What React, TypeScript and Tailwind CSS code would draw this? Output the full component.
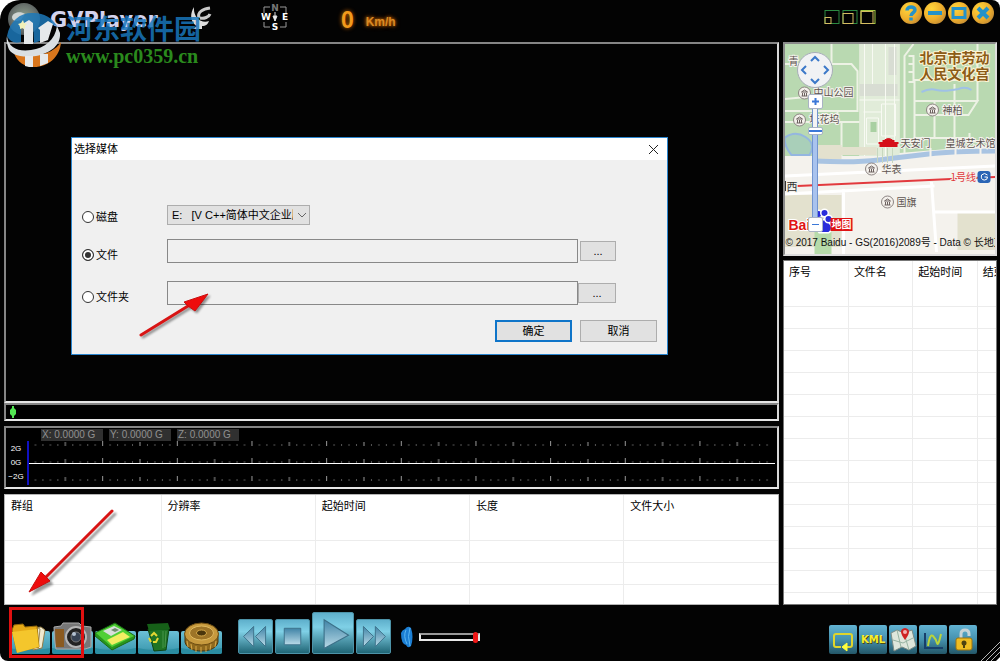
import type { ReactNode } from "react";
import { clsx } from "clsx";

const clipColumns = ["群组", "分辨率", "起始时间", "长度", "文件大小"];
const fileColumns = ["序号", "文件名", "起始时间", "结束时间"];

const sunken = "border-2 border-t-[#858585] border-l-[#858585] border-r-[#d8d8d8] border-b-[#e6e6e6]";
const dialogButton = "border border-[#adadad] bg-[#e1e1e1] text-black";

function OrbLogo() {
  return (
    <svg viewBox="0 0 34 36" className="h-9 w-[34px] shrink-0" aria-hidden="true">
      <defs>
        <radialGradient id="orb" cx="50%" cy="45%" r="60%">
          <stop offset="0" stopColor="#8fa48f" />
          <stop offset="0.6" stopColor="#6c7570" />
          <stop offset="1" stopColor="#4b4f50" />
        </radialGradient>
      </defs>
      <circle cx="18" cy="19" r="16" fill="url(#orb)" />
      <path d="M6 17c1-5 9-6 13-3l-4 6c-5 2-9 1-9-3z" fill="#cfd4d2" />
    </svg>
  );
}

function Watermark() {
  return (
    <div className="pointer-events-none absolute top-2.5 left-1.5 z-20 flex gap-1">
      <svg viewBox="0 0 56 58" className="h-[58px] w-14" aria-hidden="true">
        <path d="M1 26C4 10 15 2 28 3c10 0 18 5 23 13L40 13l-3 17-9 3-1-20H15v19C9 34 4 32 1 26z" fill="#1c78b8" opacity=".85" />
        <path d="M8 43c3 9 11 14 20 14 14 0 26-10 27-25-5 8-14 12-25 13-9 1-16 0-22-2z" fill="#d9761c" />
        <path d="M1 26c1 12 12 16 24 14 14-2 24-10 26-24l3 7c1 12-9 20-24 23-15 2-26-1-28-9-1-4-2-7-1-11z" fill="#dadfe2" />
        <path d="M13 16 23 10l4 3v21h-9V19zM32 18l10-7 5 3-5 16-8 3v-13z" fill="#e6e9eb" />
        <path d="M19 46h8v11h-4l-4-1zM34 44h8v9l-8 3z" fill="#e6e9eb" />
        <path d="m17 10 1 3 3 1-2 2v3l-2-1-3 1v-3l-2-2 3-1z" fill="#f2f0b8" />
      </svg>
      <div className="pt-1.5">
        <div className="font-['Noto_Sans_CJK_SC',sans-serif] text-[27px] leading-6 font-bold text-[#1877bd]/85">河东软件园</div>
        <div className="pt-1 font-['Liberation_Serif',serif] text-[20px] leading-6 font-bold text-[#2a8a1d]">www.pc0359.cn</div>
      </div>
    </div>
  );
}

function Compass() {
  return (
    <svg viewBox="0 0 30 30" className="h-[30px] w-[30px]" fontFamily="DejaVu Sans, sans-serif" fontWeight="700" fontSize="9" textAnchor="middle">
      <path d="M10 5H4v6M20 5h6v6M4 20v5h6M26 20v5h-6" fill="none" stroke="#9b9b9b" />
      <path d="M15 10v9M13 14h4l-2 5z" fill="#fff" stroke="#ddd" />
      <text x="15" y="9" fill="#777">N</text>
      <text x="6" y="18" fill="#fff">W</text>
      <text x="25" y="18" fill="#fff">E</text>
      <text x="15" y="28" fill="#fff">S</text>
    </svg>
  );
}

function LayoutButton({ size, label }: { size: number; label: string }) {
  return (
    <button type="button" aria-label={label} className="h-4 w-4">
      <svg viewBox="0 0 16 16" className="block">
        <rect x="1" y="1.5" width="14" height="13" fill="none" stroke={size > 10 ? "#a3c844" : "#2c8a42"} />
        <rect x="1" y={14.5 - size} width={size} height={size} fill="none" stroke="#d5bd62" />
      </svg>
    </button>
  );
}

function RoundButton({ label, children }: { label: string; children: ReactNode }) {
  return (
    <button
      type="button"
      aria-label={label}
      className="flex h-[22px] w-[22px] items-center justify-center rounded-full bg-radial-[at_35%_30%] from-[#ffd53c] via-[#eeae2c] to-[#a8763a]"
    >
      <svg viewBox="0 0 22 22" className="h-[22px] w-[22px]" fill="none" stroke="#2592c9" strokeWidth="4">
        {children}
      </svg>
    </button>
  );
}

function Header() {
  return (
    <header className="relative flex h-[42px] items-start pr-1.5 pl-1.5">
      <OrbLogo />
      <h1 className="mt-1.5 ml-2.5 font-['DejaVu_Sans',sans-serif] text-[21px] leading-7 font-bold text-[#d3d3ee]">GVPlayer</h1>
      <svg viewBox="0 0 22 24" className="mt-1.5 ml-8 h-6 w-[22px]" aria-hidden="true">
        <path d="M4 1C-1 9 1 17 7 20l-4 3h9v-3c4 0 6-2 7-5-8 3-16-4-15-14z" fill="#dcdcdc" />
        <path d="M9 12c-2-6 4-9 11-10M10 12c4 1 9-1 10-4" fill="none" stroke="#c9c9c9" strokeWidth="3" />
      </svg>
      <div className="mt-0.5 ml-12">
        <Compass />
      </div>
      <div className="ml-[51px] flex items-end font-['Liberation_Sans',sans-serif] font-bold">
        <span className="pt-1.5 text-[23px] leading-7 text-[#f29a1c] [text-shadow:0_0_4px_#d06a00]">0</span>
        <span className="ml-3 text-xs leading-6 text-[#d98a25] [text-shadow:0_0_3px_#d06a00,0_0_5px_#a85000]">Km/h</span>
      </div>
      <div className="mt-[9px] ml-auto flex gap-0.5">
        <LayoutButton size={6} label="小窗口" />
        <LayoutButton size={10} label="中窗口" />
        <LayoutButton size={12} label="大窗口" />
      </div>
      <div className="mt-0.5 ml-6 flex gap-0.5">
        <RoundButton label="帮助">
          <path d="M7 8.500C7 4 15 4 15 8c0 3-4 2.500-4 6M11 15.500v3" strokeWidth="3.500" />
        </RoundButton>
        <RoundButton label="最小化">
          <path d="M4 11h14" />
        </RoundButton>
        <RoundButton label="最大化">
          <path d="M5 6.500h12v9H5z" strokeWidth="3" />
        </RoundButton>
        <RoundButton label="关闭">
          <path d="m6 6 10 10M16 6 6 16" />
        </RoundButton>
      </div>
      <Watermark />
    </header>
  );
}

function MediaRow({ label, checked, children }: { label: string; checked?: boolean; children: ReactNode }) {
  return (
    <div className="flex items-end">
      <label className="flex h-4 w-[85px] shrink-0 items-center gap-0.5">
        <input
          type="radio"
          name="media"
          defaultChecked={checked}
          className="h-3 w-3 appearance-none rounded-full border border-[#333] bg-white checked:bg-[#333] checked:shadow-[inset_0_0_0_2px_#fff]"
        />
        {label}
      </label>
      {children}
    </div>
  );
}

function MediaDialog() {
  return (
    <section role="dialog" aria-labelledby="media-title" className="absolute top-[93px] left-[65px] z-10 w-[597px] border border-[#2b86cf] bg-[#f0f0f0] text-[11px] text-black">
      <div className="flex h-[22px] items-center justify-between bg-white pr-2 pl-0.5">
        <h2 id="media-title">选择媒体</h2>
        <button type="button" aria-label="关闭">
          <svg viewBox="0 0 11 11" className="h-[11px] w-[11px]" stroke="#222">
            <path d="m1 1 9 9M10 1l-9 9" />
          </svg>
        </button>
      </div>
      <form className="pt-[45px] pr-2.5 pb-3 pl-2.5">
        <MediaRow label="磁盘">
          <div className="relative">
            <select aria-label="磁盘" className="block h-5 w-[143px] appearance-none overflow-hidden border border-[#adadad] bg-[#e1e1e1] pr-4 pl-1 text-clip">
              <option>E:&nbsp;&nbsp; [V C++简体中文企业版]</option>
            </select>
            <svg viewBox="0 0 8 5" className="pointer-events-none absolute top-2 right-1 h-[5px] w-2" fill="none" stroke="#666">
              <path d="m0 0 4 4 4-4" />
            </svg>
          </div>
        </MediaRow>
        <div className="mt-3.5">
          <MediaRow label="文件" checked>
            <input type="text" aria-label="文件路径" className="h-6 w-[411px] border border-[#888] bg-[#f0f0f0] px-1" />
            <button type="button" aria-label="浏览文件" className={clsx(dialogButton, "ml-0.5 h-5 w-9 self-center")}>...</button>
          </MediaRow>
        </div>
        <div className="mt-4.5">
          <MediaRow label="文件夹">
            <input type="text" aria-label="文件夹路径" className="h-6 w-[411px] border border-[#888] bg-[#f0f0f0] px-1" />
            <button type="button" aria-label="浏览文件夹" className={clsx(dialogButton, "h-5 w-[38px] self-center")}>...</button>
          </MediaRow>
        </div>
        <div className="mt-[15px] flex justify-end gap-2">
          <button type="button" className="h-[22px] w-[77px] border-2 border-[#0f75c9] bg-[#e1e1e1]">确定</button>
          <button type="button" className={clsx(dialogButton, "h-[22px] w-[77px]")}>取消</button>
        </div>
      </form>
      <svg viewBox="0 0 72 48" className="pointer-events-none absolute top-[154px] left-[66px] h-12 w-[72px] drop-shadow-[2px_2px_1px_rgba(0,0,0,0.4)]">
        <path d="M3 43 50 14" stroke="#d81414" strokeWidth="3" strokeLinecap="round" />
        <path d="M70 2 46 10l4 4 7 5z" fill="#ee0c0c" stroke="#c80f0f" />
      </svg>
    </section>
  );
}

function SensorPanel() {
  const ticks = Array.from({ length: 10 }, (_, i) => i);
  return (
    <section className={clsx("mt-[5px] h-[63px] bg-black pt-px", sunken)}>
      <div className="flex gap-1.5 pl-[35px] font-['Liberation_Sans',sans-serif] text-[10px] leading-3 text-[#909090]">
        <div className="w-[62px] bg-[#303030] pl-px">X: 0.0000 G</div>
        <div className="w-[62px] bg-[#303030] pl-px">Y: 0.0000 G</div>
        <div className="w-[62px] bg-[#303030] pl-px">Z: 0.0000 G</div>
      </div>
      <div className="flex h-[45px]">
        <div className="flex w-5 shrink-0 flex-col pt-px text-center font-['Liberation_Sans',sans-serif] text-[8px] leading-[14px] text-white">
          <span>2G</span>
          <span>0G</span>
          <span>−2G</span>
        </div>
        <svg className="mr-0.5 h-[45px] min-w-0 flex-1" aria-hidden="true">
          <defs>
            <pattern id="ticks" width="74.66" height="45" patternUnits="userSpaceOnUse" x="1.500">
              {ticks.map((i) => {
                const h = i === 0 ? 5 : i === 5 ? 4 : 2;
                const x = i * 7.466 + 0.5;
                return (
                  <path
                    key={i}
                    d={`M${x} 5v-${h}M${x} 22v-${h}M${x} 40v-${h}`}
                    stroke={h > 2 ? "#999" : "#555"}
                  />
                );
              })}
            </pattern>
          </defs>
          <rect x="5" width="99%" height="45" fill="url(#ticks)" />
          <path d="M2 0v44" stroke="#1010c0" strokeWidth="2" />
          <rect x="3" y="22" width="100%" height="1" fill="#fff" />
        </svg>
      </div>
    </section>
  );
}

function ClipTable() {
  return (
    <section className="relative mt-[5px] border border-[#b5b5b5] bg-white">
      <table className="w-full table-fixed border-collapse text-left text-[11px] text-black">
        <thead>
          <tr className="h-[23px]">
            {clipColumns.map((name) => (
              <th key={name} className="border-r border-[#ececec] pl-1.5 font-normal first:w-[156px] last:border-r-0">{name}</th>
            ))}
          </tr>
        </thead>
        <tbody>
          {[0, 1, 2, 3].map((row) => (
            <tr key={row} className="h-[22px] border-b border-[#ececec] last:h-[20px] last:border-b-0">
              {clipColumns.map((name) => (
                <td key={name} className="border-r border-[#ececec] last:border-r-0" />
              ))}
            </tr>
          ))}
        </tbody>
      </table>
      <svg viewBox="0 0 92 90" className="pointer-events-none absolute top-[12px] left-[21px] h-[90px] w-[92px] drop-shadow-[3px_3px_1px_rgba(0,0,0,0.4)]">
        <path d="M86 4 16 74" stroke="#d81414" strokeWidth="3" strokeLinecap="round" />
        <path d="M3 85 15 65l4 4 5 5z" fill="#ee0c0c" stroke="#c80f0f" />
      </svg>
    </section>
  );
}

function FileTable() {
  return (
    <section className="mt-1 min-h-0 flex-1 basis-0 overflow-hidden border border-[#777] bg-white">
      <table className="w-[258px] table-fixed border-collapse text-left text-[11px] text-black">
        <thead>
          <tr className="h-[23px]">
            {fileColumns.map((name) => (
              <th key={name} className="border-r border-[#ececec] pl-[5px] font-normal whitespace-nowrap">{name}</th>
            ))}
          </tr>
        </thead>
        <tbody>
          {Array.from({ length: 15 }, (_, row) => (
            <tr key={row} className="h-[22px] border-b border-[#ececec]">
              {fileColumns.map((name) => (
                <td key={name} className="border-r border-[#ececec]" />
              ))}
            </tr>
          ))}
        </tbody>
      </table>
    </section>
  );
}

function Landmark({ x, y }: { x: number; y: number }) {
  return (
    <g transform={`translate(${x} ${y})`}>
      <circle r="6" fill="#f4f1ec" stroke="#8b8381" />
      <path d="M-3-1 0-3l3 2zM-2 0v3M0 0v3M2 0v3M-3 3h6" fill="none" stroke="#6d6260" />
    </g>
  );
}

function MapDrawing() {
  return (
    <svg viewBox="0 0 211 210" preserveAspectRatio="xMidYMid slice" className="h-full w-full" fontFamily="Noto Sans CJK SC, sans-serif" fontSize="10" fill="#5d5450">
      <rect width="211" height="210" fill="#f4f2ed" />
      <path d="M0 0h75v112H0zM115 0h96v101l-96 8z" fill="#b9d9b1" />
      <rect x="75" width="40" height="112" fill="#e1ecd9" />
      <path d="M75 40h38v12H75zM104 3h8v28h-8z" fill="#d8ddd3" />
      <path d="M80 0v112M88 0v40M101 0v112M110 0v100M75 56h40M82 74h12v26H82zM97 60h14v32H97zM79 68h18" fill="none" stroke="#f8faf3" />
      <rect x="86" y="78" width="6" height="10" fill="#a9d0a2" />
      <path d="M0 20h67l6 7v40H0M47 0v20M0 78h75M57 78v34M53 67v11M0 55l22-2" fill="none" stroke="#edf2e5" strokeWidth="2" />
      <path d="M129 0l-9 12v97M124 12h5v26h-5M124 20h5M124 28h5M130 36v58h55v-5M130 57h63l-9 14h-54M193 57V0M150 57v37M170 40v54M130 36h65" fill="none" stroke="#edf2e5" strokeWidth="2" />
      <path d="M137 48q8-4 15-2t22-1q7-3 13 1" fill="none" stroke="#9fc1e6" strokeWidth="2" />
      <path d="M0 94q10-8 21-1t4 18H7Q0 103 0 94z" fill="#a9cfb9" stroke="#94b6e0" strokeWidth="2" />
      <path d="M33 101h24v14H33zM0 151h57v52H0zM173 168h38v38h-38zM57 103h35v8H57z" fill="#e3e1ce" />
      <path d="M30 178h17v32H30z" fill="#b6dbaa" />
      <path d="M30 117q40 2 64-1t50-6 67-3" fill="none" stroke="#a9c4e2" strokeWidth="5" />
      <path d="M146 104v12M171 102v12M196 102v10" stroke="#f4f2ed" strokeWidth="2" />
      <path d="M0 132l211-10M59 145v65M147 138l5 70M150 168h61M0 150l150-8" fill="none" stroke="#fff" strokeWidth="3" />
      <path d="M93 104v15M98 104v15M103 104v15M108 104v15" stroke="#c7d7bf" />
      <path d="M13 142 211 133" stroke="#e23a3e" strokeWidth="2" />
      <g fill="#8c5c16" stroke="#fdf3d2" strokeWidth="2" paintOrder="stroke" fontSize="14" fontWeight="700">
        <text x="135" y="19">北京市劳动</text>
        <text x="135" y="35">人民文化宫</text>
      </g>
      <g stroke="#f4f2ed" strokeWidth="2" paintOrder="stroke">
        <text x="4" y="21">青</text>
        <text x="29" y="52">中山公园</text>
        <text x="25" y="79">坛花坞</text>
        <text x="158" y="70">神柏</text>
        <text x="116" y="103">天安门</text>
        <text x="161" y="103">皇城艺术馆</text>
        <text x="97" y="129">华表</text>
        <text x="112" y="162">国旗</text>
        <text x="166" y="137" fill="#e0353a">1号线</text>
        <text x="2" y="147" fontSize="11" fill="#333">西</text>
        <path d="M1 137v10" stroke="#333" strokeWidth="1" />
      </g>
      <Landmark x={20} y={49} />
      <Landmark x={15} y={76} />
      <Landmark x={148} y={66} />
      <Landmark x={87} y={125} />
      <Landmark x={103} y={158} />
      <path d="M95 103v-3h-1v-2h4v-2h12v2h4v2h-1v3z" fill="#d5101a" />
      <path d="M99 97q5-5 10 0z" fill="#d5101a" stroke="#d5101a" />
      <rect x="193" y="127" width="13" height="12" rx="3" fill="#2a65b5" />
      <path d="M203 131q-3-3-6 0-1 5 3 5 3 0 3-3h-3" fill="none" stroke="#fff" />
      <g fill="#2a2ddb" stroke="#fff" paintOrder="stroke" strokeWidth="3">
        <path d="M35 188q-5-6 3-11 3-2 6 2 5 6 0 9z" />
        <circle cx="34" cy="170" r="3" />
        <circle cx="40" cy="169" r="3" />
        <circle cx="44" cy="175" r="3" />
      </g>
      <text x="4" y="186" fontFamily="Liberation Sans, sans-serif" fontSize="14" fontWeight="700" fill="#e01414" stroke="#fff" strokeWidth="2" paintOrder="stroke">Bai</text>
      <rect x="46" y="174" width="22" height="13" fill="#e01414" />
      <text x="47" y="184" fontWeight="700" fill="#fff">地图</text>
      <text x="1" y="202" fontFamily="Liberation Sans, Noto Sans CJK SC, sans-serif" fontSize="10" fill="#111">
        © 2017 Baidu - GS(2016)2089号 - Data © 长地万
      </text>
    </svg>
  );
}

const zoomButton = "flex w-[15px] items-center justify-center rounded-xs border border-[#a9b3c4] bg-white text-[#3b78d8]";

function MapPanel() {
  return (
    <section className="relative aspect-square w-full shrink-0 overflow-hidden border-2 border-[#8a8a8a] border-r-[#ddd] border-b-[#ddd]">
      <MapDrawing />
      <div className="absolute top-2 left-3 flex flex-col items-center">
        <button type="button" aria-label="平移" className="h-9 w-9 rounded-full border border-[#a7adb8] bg-[#f1f2f4]">
          <svg viewBox="0 0 34 34" className="block" fill="none" stroke="#3b78c8" strokeWidth="2">
            <path d="m13 8 4-4 4 4M13 26l4 4 4-4M8 13l-4 4 4 4M26 13l4 4-4 4" />
          </svg>
        </button>
        <button type="button" aria-label="放大" className={clsx(zoomButton, "mt-1.5 h-[15px]")}>
          <svg viewBox="0 0 9 9" className="h-[9px] w-[9px]" stroke="currentColor" strokeWidth="2">
            <path d="M1 4.500h7M4.500 1v7" />
          </svg>
        </button>
        <div className="relative flex h-[108px] w-[15px] justify-center">
          <div className="h-full w-1.5 border-x border-[#7295cf] bg-linear-to-b from-[#f4f4f4] from-20% to-[#a9c3ee] to-20%" />
          <input
            type="range"
            aria-label="缩放级别"
            defaultValue={82}
            className="absolute inset-0 h-full w-[15px] appearance-none bg-transparent [direction:rtl] [writing-mode:vertical-lr] [&::-webkit-slider-thumb]:h-2 [&::-webkit-slider-thumb]:w-[15px] [&::-webkit-slider-thumb]:appearance-none [&::-webkit-slider-thumb]:rounded-xs [&::-webkit-slider-thumb]:border [&::-webkit-slider-thumb]:border-[#a9b3c4] [&::-webkit-slider-thumb]:bg-[linear-gradient(#fff_34%,#3b78d8_34%,#3b78d8_66%,#fff_66%)]"
          />
        </div>
        <button type="button" aria-label="缩小" className={clsx(zoomButton, "h-[15px]")}>
          <svg viewBox="0 0 9 9" className="h-[9px] w-[9px]" stroke="currentColor" strokeWidth="1">
            <path d="M1 4.500h7" />
          </svg>
        </button>
      </div>
    </section>
  );
}

function ToolButton({ label, children }: { label: string; children: ReactNode }) {
  return (
    <button type="button" aria-label={label} className="h-8 w-[41px]">
      <svg viewBox="0 0 41 32" className="block h-8 w-[41px]">
        <rect y="9" width="41" height="23" rx="2" fill="url(#tile)" />
        <path d="M0 26q20 5 41 0v4q0 2-2 2H2q-2 0-2-2z" fill="#2b8da2" />
        {children}
      </svg>
    </button>
  );
}

const mediaButton = "overflow-hidden rounded-xs border border-[#4d93a8] bg-linear-to-b from-[#5fb0cc] via-[#7fd0e6] via-35% to-[#1f6676]";

function PlayButton({ label, large, children }: { label: string; large?: boolean; children: ReactNode }) {
  return (
    <button type="button" aria-label={label} className={clsx(mediaButton, large ? "h-[42px] w-[42px]" : "h-[35px] w-[35px]")}>
      <svg viewBox="0 0 36 36" className="h-full w-full" fill="url(#glyph)" stroke="#3c7088">
        {children}
      </svg>
    </button>
  );
}

function SideButton({ label, children }: { label: string; children: ReactNode }) {
  return (
    <button type="button" aria-label={label} className="flex h-[29px] w-7 items-center justify-center rounded-xs bg-linear-to-b from-[#62b3d3] via-[#4591ae] to-[#245768]">
      {children}
    </button>
  );
}

function Footer() {
  return (
    <footer className="relative flex h-14 items-end pb-[7px] pl-[9px]">
      <svg className="absolute h-0 w-0" aria-hidden="true">
        <defs>
          <linearGradient id="tile" x2="0" y2="1">
            <stop offset="0" stopColor="#6cc0d6" />
            <stop offset="0.75" stopColor="#44a0b6" />
            <stop offset="1" stopColor="#1b6d80" />
          </linearGradient>
          <linearGradient id="glyph" x2="0" y2="1">
            <stop offset="0" stopColor="#3f83a6" />
            <stop offset="1" stopColor="#b9dbe8" />
          </linearGradient>
        </defs>
      </svg>
      <div className="flex gap-0.5">
        <ToolButton label="打开">
          <path d="m24 6 8-1 4 3-3 18-9 2z" fill="#f0ead0" stroke="#917b44" />
          <path d="m27 5 4 2-2 19" fill="none" stroke="#9b8a5c" />
          <path d="m3 8 2-5 9-1 2 3 12-1 2 21-22 5z" fill="#e5a916" stroke="#94690a" />
          <path d="m3 10 25-3 2 18-22 6z" fill="#f4c62c" />
        </ToolButton>
        <ToolButton label="拍照">
          <path d="M2 5 9 4l2-3h16l3 3 9 1v20l-6 2H4q-2-9-2-22z" fill="#777" stroke="#aaa" />
          <path d="M3 7h9v18H4z" fill="#8a5a20" />
          <circle cx="24" cy="15" r="10" fill="#222" stroke="#b5b5b5" strokeWidth="2" />
          <circle cx="24" cy="15" r="5" fill="#364152" stroke="#777" />
          <circle cx="22" cy="12" r="2" fill="#b4c1d0" />
        </ToolButton>
        <ToolButton label="保存">
          <path d="m0 11 20-10 20 13-1 3-22 11L0 14z" fill="#29961d" stroke="#1a6b14" />
          <path d="m1 11 19-9 19 12-22 11z" fill="#50cf35" />
          <path d="m8 9 11-5 8 4-11 6z" fill="#d8dedb" />
          <path d="m20 6 4 2-4 2-4-2z" fill="#6c8a6d" />
          <path d="m12 18 16-8 7 5-18 8z" fill="#f3ee63" />
        </ToolButton>
        <ToolButton label="删除">
          <path d="M10 7h21l-3 21-12 1z" fill="#1f7424" stroke="#0d4513" />
          <path d="m9 2 21-1 2 6-21 2z" fill="#166018" />
          <path d="m13 14 3-3 3 3M20 16l-2 4h-3M13 20l-2-4" fill="none" stroke="#e4d833" strokeWidth="2" />
          <path d="M25 9v17M28 9l-1 16" stroke="#49954b" />
        </ToolButton>
        <ToolButton label="设置">
          <path d="M4 13v7c2 12 31 12 33 0v-7z" fill="#8f691d" stroke="#4a3408" />
          <path d="m6 19 1 6M10 22l1 6M15 24v6M20 25v6M25 24v6M30 22l-1 6M35 19l-1 6" stroke="#d8aa4a" />
          <ellipse cx="20.500" cy="12" rx="17" ry="11" fill="#c79a3e" stroke="#6f4e12" />
          <ellipse cx="20.500" cy="11" rx="12" ry="7" fill="#9d7427" stroke="#e0ba60" />
          <ellipse cx="20.500" cy="11" rx="5" ry="3" fill="#4a360c" stroke="#d3a749" />
        </ToolButton>
      </div>
      <div className="ml-[16px] flex items-end gap-0.5">
        <PlayButton label="后退">
          <path d="M16 7v22L5 18zM29 7v22L18 18z" />
        </PlayButton>
        <PlayButton label="停止">
          <path d="M9 9h18v18H9z" />
        </PlayButton>
        <PlayButton label="播放" large>
          <path d="M10 6v26l22-12z" />
        </PlayButton>
        <PlayButton label="快进">
          <path d="M7 7v22l11-11zM20 7v22l11-11z" />
        </PlayButton>
      </div>
      <div className="mb-1.5 ml-2.5 flex items-center gap-1.5">
        <svg viewBox="0 0 12 22" className="h-[22px] w-3" aria-hidden="true">
          <path d="M0 7q1-3 4-4 3-4 6-1 3 9 0 18-3 3-5-1Q0 18 0 7z" fill="#1c7fd4" />
          <path d="M5 4q-3 6 1 14M9 2q-3 8 0 18" fill="none" stroke="#5ab6f2" />
        </svg>
        <input
          type="range"
          aria-label="音量"
          defaultValue={100}
          className="h-2 w-[61px] appearance-none border-2 border-[#e8e8e8] border-t-[#999] bg-black [&::-webkit-slider-thumb]:h-[11px] [&::-webkit-slider-thumb]:w-[5px] [&::-webkit-slider-thumb]:appearance-none [&::-webkit-slider-thumb]:rounded-full [&::-webkit-slider-thumb]:bg-[#f01818]"
        />
      </div>
      <div className="mr-[23px] ml-auto flex gap-0.5">
        <SideButton label="循环">
          <svg viewBox="0 0 28 28" fill="none" stroke="#e0d52c" strokeWidth="2">
            <path d="M12 21H7q-2 0-2-2v-9q0-2 2-2h14q2 0 2 2v9q0 2-2 2h-3" />
            <path d="m18 17-5 4 5 4z" fill="#ffff3c" stroke="#ffff3c" strokeWidth="1" />
          </svg>
        </SideButton>
        <SideButton label="导出 KML">
          <span className="font-['DejaVu_Sans',sans-serif] text-[10px] font-bold text-[#f6ee2e] [text-shadow:1px_1px_0_#4c4a10]">KML</span>
        </SideButton>
        <SideButton label="地图">
          <svg viewBox="0 0 28 28">
            <path d="m2 7 6-3 7 3 8-3 4 16-7 4-7-3-8 4z" fill="#dfe6dc" stroke="#7c8b86" />
            <path d="m8 4 4 17M15 7l5 17M4 14l10 3 10-5" stroke="#97b3a2" fill="none" />
            <path d="M16 14q-8-11 0-12 8 1 0 12z" fill="#cf2222" />
            <circle cx="16" cy="6" r="2" fill="#f3b1b1" />
          </svg>
        </SideButton>
        <SideButton label="曲线">
          <svg viewBox="0 0 28 28" fill="none" strokeWidth="2">
            <path d="M6 7v15h18" stroke="#173f6b" />
            <path d="M9 20q2-13 5-10t4 7 4-9" stroke="#b9d43c" />
          </svg>
        </SideButton>
        <SideButton label="解锁">
          <svg viewBox="0 0 28 28">
            <path d="M12 12V8q0-4 4-4t4 4v2" fill="none" stroke="#c7d3d6" strokeWidth="3" />
            <rect x="7" y="12" width="16" height="12" rx="2" fill="#efbd22" stroke="#9c7210" />
            <circle cx="15" cy="17" r="2.500" fill="#4f4310" />
            <path d="M15 18v4" stroke="#4f4310" strokeWidth="2" />
          </svg>
        </SideButton>
      </div>
      <svg viewBox="0 0 20 20" className="absolute right-0 bottom-0 h-5 w-5" aria-hidden="true">
        <path d="M1 20 20 1M6 20 20 6M11 20l9-9" stroke="#b5b5b5" />
        <path d="M20 16v4h-4z" fill="#fff" />
      </svg>
      <div className="pointer-events-none absolute top-0.5 left-[9px] h-[51px] w-[75px] border-3 border-[#e01010]" />
    </footer>
  );
}

export default function App() {
  return (
    <div className="bg-white">
      <div className="flex min-h-screen flex-col overflow-hidden rounded-tl-[20px] rounded-tr-lg rounded-bl-lg bg-[#030303] font-['Liberation_Sans','Noto_Sans_CJK_SC',sans-serif]">
        <Header />
        <main className="flex flex-1 gap-1 pr-[3px] pl-1">
          <div className="flex min-w-0 flex-1 flex-col">
            <section className={clsx("relative min-h-[361px] flex-1 bg-[#030303]", sunken)}>
              <MediaDialog />
            </section>
            <div className={clsx("h-[18px] bg-black pt-px pl-1", sunken)}>
              <svg viewBox="0 0 6 12" className="h-3 w-1.5" aria-hidden="true">
                <path d="M2 0h2v2l2 2v4l-2 2v2H2v-2L0 8V4l2-2z" fill="#52e552" />
              </svg>
            </div>
            <SensorPanel />
            <ClipTable />
          </div>
          <aside className="flex w-[214px] shrink-0 flex-col">
            <MapPanel />
            <FileTable />
          </aside>
        </main>
        <Footer />
      </div>
    </div>
  );
}
